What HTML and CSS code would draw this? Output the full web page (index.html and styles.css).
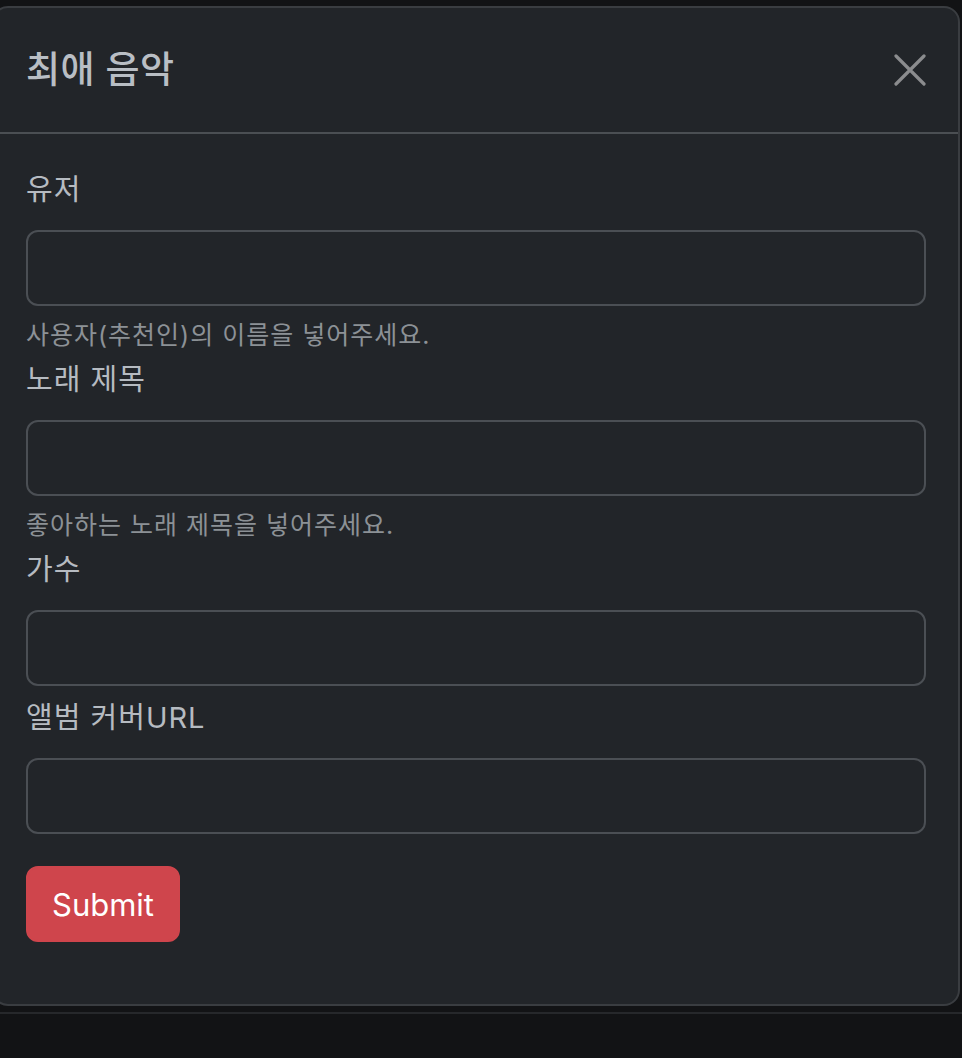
FILE: index.html
```html
<!DOCTYPE html>
<html lang="ko">
<head>
    <meta charset="UTF-8">
    <meta name="viewport" content="width=device-width, initial-scale=1.0">
    <title>최애 음악</title>
    <link rel="stylesheet" href="styles.css">
</head>
<body>
    <div class="backdrop">
        <div class="modal-content">
            <div class="modal-header">
                <h5 class="modal-title">최애 음악</h5>
                <button type="button" class="btn-close" aria-label="Close">
                    <svg width="32" height="32" viewBox="0 0 32 32">
                        <path d="M2 2 L30 30 M30 2 L2 30" stroke="currentColor" stroke-width="3.2" stroke-linecap="round" fill="none"/>
                    </svg>
                </button>
            </div>
            <div class="modal-body">
                <form>
                    <div class="field">
                        <label for="user" class="form-label">유저</label>
                        <input type="text" class="form-control" id="user">
                        <div class="form-text">사용자(추천인)의 이름을 넣어주세요.</div>
                    </div>
                    <div class="field">
                        <label for="title" class="form-label">노래 제목</label>
                        <input type="text" class="form-control" id="title">
                        <div class="form-text">좋아하는 노래 제목을 넣어주세요.</div>
                    </div>
                    <div class="field spaced">
                        <label for="singer" class="form-label">가수</label>
                        <input type="text" class="form-control" id="singer">
                    </div>
                    <div class="field">
                        <label for="cover" class="form-label">앨범 커버URL</label>
                        <input type="text" class="form-control" id="cover">
                    </div>
                    <button type="submit" class="btn-danger">Submit</button>
                </form>
            </div>
        </div>
        <div class="page-edge"></div>
    </div>
</body>
</html>
```

FILE: styles.css
```css
body, html {
    margin: 0;
    padding: 0;
    height: 100%;
    background-color: #121315;
    font-family: 'Inter', 'Noto Sans CJK KR', sans-serif;
    overflow: hidden;
}
.backdrop {
    padding-top: 6px;
}
.modal-content {
    margin: 0 2px 0 -8px;
    background-color: #222529;
    border: 2px solid #3a3d41;
    border-radius: 16px;
}
.modal-header {
    display: flex;
    align-items: center;
    padding: 30px 32px;
    border-bottom: 2px solid #4b4f53;
}
.modal-title {
    margin: 0;
    font-size: 37px;
    font-weight: 500;
    letter-spacing: 0.5px;
    line-height: 48px;
    color: #b9bec4;
}
.btn-close {
    margin: 0 -16px 0 auto;
    padding: 16px;
    width: 64px;
    height: 64px;
    border: none;
    background: none;
    color: #8b8c8e;
    display: flex;
    align-items: center;
    justify-content: center;
    cursor: pointer;
}
.modal-body {
    padding: 32px 32px 62px;
}
.field {
    display: flex;
    flex-direction: column;
}
.field.spaced {
    margin-bottom: 8px;
}
.form-label {
    font-size: 29px;
    letter-spacing: 1px;
    line-height: 48px;
    margin-bottom: 16px;
    color: #b6bbc1;
}
.form-control {
    box-sizing: border-box;
    height: 76px;
    width: 100%;
    background-color: #222529;
    border: 2px solid #4b4f54;
    border-radius: 12px;
    margin: 0;
}
.form-text {
    margin-top: 8px;
    font-size: 25px;
    letter-spacing: 1px;
    line-height: 42px;
    color: #8c9196;
}
.btn-danger {
    margin-top: 32px;
    height: 76px;
    padding: 0 24px;
    font-family: inherit;
    font-size: 31px;
    color: #fff;
    background-color: #cf454c;
    border: 2px solid #cf454c;
    border-radius: 12px;
    cursor: pointer;
}
.page-edge {
    margin-top: 6px;
    border-top: 2px solid #26282b;
}
```
